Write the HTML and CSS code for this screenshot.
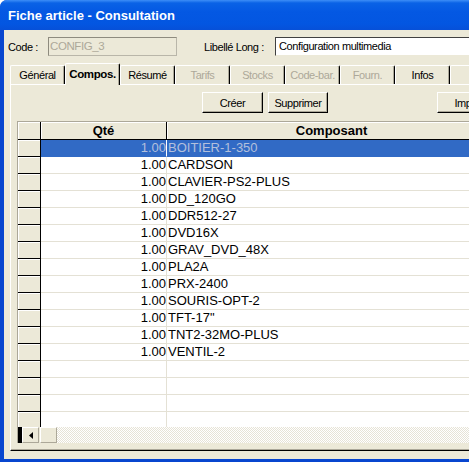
FILE: index.html
```html
<!DOCTYPE html>
<html lang="fr">
<head>
<meta charset="utf-8">
<title>Fiche article - Consultation</title>
<link rel="stylesheet" href="styles.css">
</head>
<body>
<div class="window">
  <div class="titlebar"><span class="title">Fiche article - Consultation</span></div>
  <div class="client">
    <div class="ident">
      <span class="lbl lbl-code">Code :</span>
      <div class="field field-off">CONFIG_3</div>
      <span class="lbl lbl-long">Libellé Long :</span>
      <div class="field field-long">Configuration multimedia</div>
    </div>
    <div class="tabs">
      <div class="tab">Général</div>
      <div class="tab tab-on">Compos.</div>
      <div class="tab">Résumé</div>
      <div class="tab tab-off">Tarifs</div>
      <div class="tab tab-off">Stocks</div>
      <div class="tab tab-off">Code-bar.</div>
      <div class="tab tab-off">Fourn.</div>
      <div class="tab">Infos</div>
      <div class="tab"></div>
    </div>
    <div class="panel">
      <div class="toolbar">
        <button class="btn btn-creer">Créer</button>
        <button class="btn btn-suppr">Supprimer</button>
        <button class="btn btn-imp">Imprimer</button>
      </div>
      <div class="grid">
        <div class="row head">
          <div class="rh"></div>
          <div class="hc">Qté</div>
          <div class="hc hc-last">Composant</div>
        </div>
        <div class="body">
          <div class="row sel"><div class="rh"></div><div class="qte">1.00</div><div class="comp">BOITIER-1-350</div></div>
          <div class="row"><div class="rh"></div><div class="qte">1.00</div><div class="comp">CARDSON</div></div>
          <div class="row"><div class="rh"></div><div class="qte">1.00</div><div class="comp">CLAVIER-PS2-PLUS</div></div>
          <div class="row"><div class="rh"></div><div class="qte">1.00</div><div class="comp">DD_120GO</div></div>
          <div class="row"><div class="rh"></div><div class="qte">1.00</div><div class="comp">DDR512-27</div></div>
          <div class="row"><div class="rh"></div><div class="qte">1.00</div><div class="comp">DVD16X</div></div>
          <div class="row"><div class="rh"></div><div class="qte">1.00</div><div class="comp">GRAV_DVD_48X</div></div>
          <div class="row"><div class="rh"></div><div class="qte">1.00</div><div class="comp">PLA2A</div></div>
          <div class="row"><div class="rh"></div><div class="qte">1.00</div><div class="comp">PRX-2400</div></div>
          <div class="row"><div class="rh"></div><div class="qte">1.00</div><div class="comp">SOURIS-OPT-2</div></div>
          <div class="row"><div class="rh"></div><div class="qte">1.00</div><div class="comp">TFT-17"</div></div>
          <div class="row"><div class="rh"></div><div class="qte">1.00</div><div class="comp">TNT2-32MO-PLUS</div></div>
          <div class="row"><div class="rh"></div><div class="qte">1.00</div><div class="comp">VENTIL-2</div></div>
          <div class="row"><div class="rh"></div><div class="qte"></div><div class="comp"></div></div>
          <div class="row"><div class="rh"></div><div class="qte"></div><div class="comp"></div></div>
          <div class="row"><div class="rh"></div><div class="qte"></div><div class="comp"></div></div>
          <div class="row"><div class="rh"></div><div class="qte"></div><div class="comp"></div></div>
          <div class="row"><div class="rh"></div><div class="qte"></div><div class="comp"></div></div>
        </div>
        <div class="hscroll">
          <div class="sb-edge"></div>
          <div class="sb-btn"><svg width="4" height="7" viewBox="0 0 4 7"><path d="M4 0 L0 3.5 L4 7 Z" fill="#000"/></svg></div>
          <div class="sb-thumb"></div>
          <div class="sb-track"></div>
        </div>
      </div>
    </div>
  </div>
</div>
</body>
</html>
```
FILE: styles.css
```css
html, body {
  margin: 0;
  padding: 0;
  background: #fff;
  overflow: hidden;
}
body {
  width: 469px;
  height: 462px;
}
.window {
  width: 560px;
  height: 462px;
  display: flex;
  flex-direction: column;
  background: #0846CF;
  border-radius: 7px 7px 0 0;
  overflow: hidden;
}
.titlebar {
  height: 28px;
  padding-top: 2px;
  flex: none;
  background: linear-gradient(#3D8EF7 0, #0A62E6 3px, #0458E3 12px, #0356E1 24px, #0650D8 30px);
}
.title {
  display: block;
  padding-left: 8px;
  font: bold 13px/28px "Liberation Sans", Arial, sans-serif;
  color: #fff;
}
.client {
  flex: 1;
  margin: 0 0 3px 4px;
  background: #ECE9D8;
  display: flex;
  flex-direction: column;
  overflow: hidden;
  font-family: "Liberation Sans", Arial, sans-serif;
  font-size: 11px;
  letter-spacing: -0.4px;
  color: #000;
}
.ident {
  display: flex;
  align-items: center;
  height: 19px;
  margin-top: 7px;
  padding-left: 4px;
  flex: none;
}
.lbl {
  white-space: nowrap;
}
.lbl-code { width: 40px; }
.lbl-long { margin-left: 27px; width: 71px; }
.field {
  box-sizing: border-box;
  height: 19px;
  line-height: 17px;
  white-space: nowrap;
  flex: none;
}
.field-off {
  width: 129px;
  border: 1px solid #B9B6A9;
  border-top-color: #8E8B7E;
  border-left-color: #8E8B7E;
  color: #ACA899;
  padding-left: 1px;
  font-size: 11.5px;
}
.field-long {
  width: 260px;
  background: #fff;
  border: 1px solid #ECE9D8;
  border-top-color: #404040;
  border-left-color: #404040;
  padding-left: 3px;
}
.tabs {
  display: flex;
  align-items: flex-end;
  height: 21px;
  margin-top: 7px;
  padding-left: 6px;
  flex: none;
}
.tab {
  box-sizing: border-box;
  width: 55px;
  height: 19px;
  border-top: 1px solid #fff;
  border-left: 1px solid #fff;
  border-right: 1px solid #000;
  box-shadow: inset -1px 0 #ACA899;
  border-radius: 2px 2px 0 0;
  text-align: center;
  line-height: 18px;
  white-space: nowrap;
  flex: none;
}
.tab-on {
  height: 22px;
  margin-bottom: -1px;
  font-weight: bold;
  font-size: 11.5px;
  line-height: 21px;
  background: #ECE9D8;
  position: relative;
  z-index: 1;
}
.tab-off {
  color: #ACA899;
}
.panel {
  flex: 1;
  margin: 0 0 8px 6px;
  width: 600px;
  border-top: 1px solid #fff;
  border-left: 1px solid #fff;
  border-bottom: 1px solid #000;
  box-shadow: inset 0 -1px #ACA899;
  display: flex;
  flex-direction: column;
}
.toolbar {
  display: flex;
  margin-top: 7px;
  height: 21px;
  flex: none;
}
.btn {
  box-sizing: border-box;
  height: 21px;
  margin: 0;
  padding: 0;
  background: #ECE9D8;
  border: 1px solid;
  border-color: #fff #000 #000 #fff;
  box-shadow: inset -1px -1px #ACA899;
  font: inherit;
  letter-spacing: inherit;
  color: #000;
  line-height: 18px;
}
.btn-creer { margin-left: 191px; width: 61px; }
.btn-suppr { margin-left: 5px; width: 60px; }
.btn-imp { margin-left: 109px; width: 75px; }
.grid {
  margin: 8px 0 0 6px;
  border-top: 1px solid #ACA899;
  border-left: 1px solid #ACA899;
  font-family: "Liberation Sans", Arial, sans-serif;
  font-size: 13px;
  letter-spacing: 0;
  flex: none;
}
.row {
  display: grid;
  grid-template-columns: 23px 126px 330px;
  height: 17px;
}
.row > div {
  box-sizing: border-box;
  height: 17px;
  line-height: 16px;
  white-space: nowrap;
  overflow: hidden;
}
.head, .head > div {
  height: 18px !important;
}
.rh {
  background: #ECE9D8;
  border-right: 1px solid #000;
  border-bottom: 1px solid #000;
  box-shadow: inset 1px 1px #fff;
}
.hc {
  background: #ECE9D8;
  border-right: 1px solid #000;
  border-bottom: 1px solid #000;
  box-shadow: inset 1px 1px #fff;
  text-align: center;
  font-weight: bold;
  line-height: 17px !important;
}
.body {
  height: 287px;
  overflow: hidden;
}
.qte {
  background: #fff;
  text-align: right;
  border-right: 1px solid #E4E1D5;
  border-bottom: 1px solid #E4E1D5;
}
.comp {
  background: #fff;
  padding-left: 1px;
  border-bottom: 1px solid #E4E1D5;
}
.sel .qte, .sel .comp {
  background: #316AC5;
  color: #B3C0DC;
  border-bottom-color: #316AC5;
}
.sel .qte {
  border-right-color: #fff;
}
.hscroll {
  display: flex;
  height: 16px;
}
.sb-edge {
  width: 4px;
  background: #000;
}
.sb-btn, .sb-thumb {
  box-sizing: border-box;
  width: 17px;
  background: #ECE9D8;
  border: 1px solid;
  border-color: #fff #ACA899 #ACA899 #fff;
}
.sb-btn {
  display: flex;
  align-items: center;
  justify-content: center;
}
.sb-thumb {
  margin-left: 1px;
}
.sb-track {
  flex: 1;
  background: repeating-conic-gradient(#fff 0 25%, #E6E3D6 0 50%) 0 0 / 2px 2px;
}
```
